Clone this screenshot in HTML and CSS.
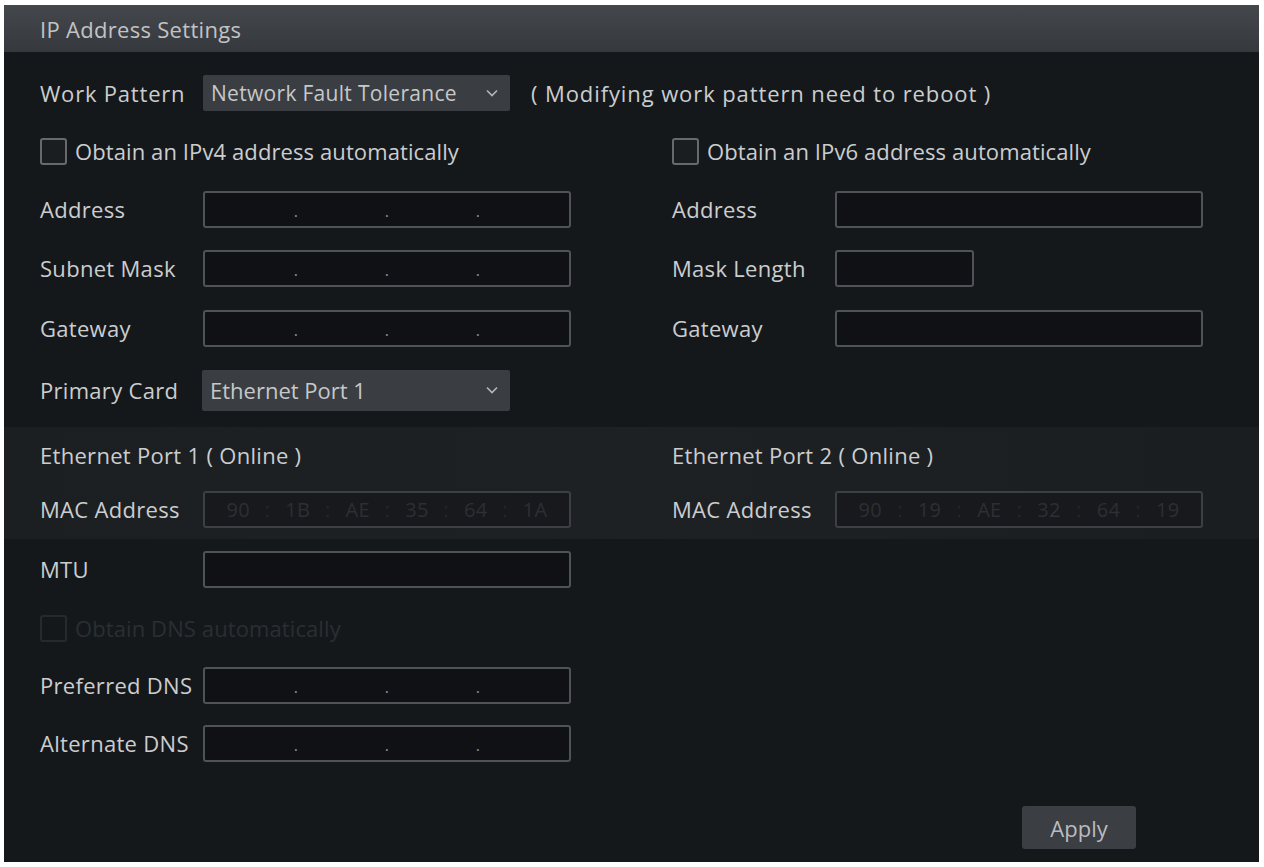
FILE: index.html
```html
<!DOCTYPE html>
<html lang="en">
<head>
    <meta charset="UTF-8">
    <meta name="viewport" content="width=device-width, initial-scale=1.0">
    <title>IP Address Settings</title>
    <link rel="stylesheet" href="styles.css">
</head>
<body>

<div class="panel">
    <div class="titlebar">IP Address Settings</div>

    <div class="content">

        <!-- Work pattern -->
        <div class="row">
            <span class="label label-short">Work Pattern</span>
            <div class="select select-work">
                <span>Network Fault Tolerance</span>
                <svg class="chev" viewBox="0 0 12 8"><polyline points="1,1.5 6,6.5 11,1.5"/></svg>
            </div>
            <span class="note">( Modifying work pattern need to reboot )</span>
        </div>

        <!-- IPv4 / IPv6 -->
        <div class="cols">
            <div class="col">
                <div class="row">
                    <label class="check"><span class="box"></span>Obtain an IPv4 address automatically</label>
                </div>
                <div class="row">
                    <span class="label">Address</span>
                    <div class="input ip"><span class="seg"></span><span class="dot">.</span><span class="seg"></span><span class="dot">.</span><span class="seg"></span><span class="dot">.</span><span class="seg"></span></div>
                </div>
                <div class="row row-60">
                    <span class="label">Subnet Mask</span>
                    <div class="input ip"><span class="seg"></span><span class="dot">.</span><span class="seg"></span><span class="dot">.</span><span class="seg"></span><span class="dot">.</span><span class="seg"></span></div>
                </div>
                <div class="row row-60">
                    <span class="label">Gateway</span>
                    <div class="input ip"><span class="seg"></span><span class="dot">.</span><span class="seg"></span><span class="dot">.</span><span class="seg"></span><span class="dot">.</span><span class="seg"></span></div>
                </div>
                <div class="row row-64">
                    <span class="label">Primary Card</span>
                    <div class="select select-card">
                        <span>Ethernet Port 1</span>
                        <svg class="chev" viewBox="0 0 12 8"><polyline points="1,1.5 6,6.5 11,1.5"/></svg>
                    </div>
                </div>
            </div>

            <div class="col">
                <div class="row">
                    <label class="check"><span class="box"></span>Obtain an IPv6 address automatically</label>
                </div>
                <div class="row">
                    <span class="label">Address</span>
                    <div class="input"></div>
                </div>
                <div class="row row-60">
                    <span class="label">Mask Length</span>
                    <div class="input input-short"></div>
                </div>
                <div class="row row-60">
                    <span class="label">Gateway</span>
                    <div class="input"></div>
                </div>
            </div>
        </div>

        <!-- Ethernet ports -->
        <div class="band">
            <div class="cols">
                <div class="col">
                    <div class="row row-56">
                        <span class="port">Ethernet Port 1 ( Online )</span>
                    </div>
                    <div class="row row-52">
                        <span class="label">MAC Address</span>
                        <div class="input mac">
                            <span>90</span><i>:</i><span>1B</span><i>:</i><span>AE</span><i>:</i><span>35</span><i>:</i><span>64</span><i>:</i><span>1A</span>
                        </div>
                    </div>
                </div>
                <div class="col">
                    <div class="row row-56">
                        <span class="port">Ethernet Port 2 ( Online )</span>
                    </div>
                    <div class="row row-52">
                        <span class="label">MAC Address</span>
                        <div class="input mac">
                            <span>90</span><i>:</i><span>19</span><i>:</i><span>AE</span><i>:</i><span>32</span><i>:</i><span>64</span><i>:</i><span>19</span>
                        </div>
                    </div>
                </div>
            </div>
        </div>

        <!-- MTU / DNS -->
        <div class="col">
            <div class="row row-60">
                <span class="label">MTU</span>
                <div class="input"></div>
            </div>
            <div class="row">
                <label class="check disabled"><span class="box"></span>Obtain DNS automatically</label>
            </div>
            <div class="row row-56">
                <span class="label">Preferred DNS</span>
                <div class="input ip"><span class="seg"></span><span class="dot">.</span><span class="seg"></span><span class="dot">.</span><span class="seg"></span><span class="dot">.</span><span class="seg"></span></div>
            </div>
            <div class="row row-60">
                <span class="label">Alternate DNS</span>
                <div class="input ip"><span class="seg"></span><span class="dot">.</span><span class="seg"></span><span class="dot">.</span><span class="seg"></span><span class="dot">.</span><span class="seg"></span></div>
            </div>
        </div>

        <div class="actions">
            <button class="apply-btn">Apply</button>
        </div>
    </div>
</div>

</body>
</html>
```

FILE: styles.css
```css
body {
    margin: 0;
    background: #ffffff;
    font-family: "Open Sans", "Noto Sans", sans-serif;
    color: #cbcdcf;
}
.panel {
    margin: 5px 5px 5px 4px;
    height: 857px;
    background: #15181b;
    display: flex;
    flex-direction: column;
}
.titlebar {
    height: 47px;
    line-height: 49px;
    padding-left: 36px;
    background: linear-gradient(#44474c, #35383d);
    color: #c2c3c5;
    font-size: 22px;
    letter-spacing: 0.3px;
}
.content {
    flex: 1;
    display: flex;
    flex-direction: column;
    padding: 12px 0 0 36px;
}
.cols {
    display: grid;
    grid-template-columns: 632px 1fr;
}
.row {
    display: flex;
    align-items: center;
    height: 58px;
    font-size: 22px;
    letter-spacing: 0.3px;
}
.row-52 { height: 52px; }
.row-56 { height: 56px; }
.row-60 { height: 60px; }
.row-64 { height: 64px; }
.label {
    width: 163px;
    flex-shrink: 0;
    white-space: nowrap;
}
.label-short {
    width: 167px;
    letter-spacing: 0.8px;
}
.note {
    margin-left: 21px;
    letter-spacing: 0.9px;
}
.select {
    display: flex;
    align-items: center;
    justify-content: space-between;
    background: #3a3d41;
    padding: 0 12px 0 8px;
    box-sizing: border-box;
    border-radius: 2px;
    color: #c6c8ca;
    letter-spacing: 0;
}
.select-work {
    width: 307px;
    height: 36px;
    margin-left: -4px;
    font-size: 21px;
    letter-spacing: 0.3px;
}
.select-card {
    width: 308px;
    height: 41px;
    margin-left: -1px;
}
.chev {
    width: 12px;
    height: 8px;
    fill: none;
    stroke: #b5b7ba;
    stroke-width: 1.6;
}
.check {
    display: flex;
    align-items: center;
    gap: 8px;
    letter-spacing: 0.1px;
}
.check .box {
    width: 23px;
    height: 23px;
    border: 2px solid #66696d;
    border-radius: 3px;
    background: #1b1e21;
}
.check.disabled {
    color: #2b2e32;
}
.check.disabled .box {
    border-color: #272a2d;
    background: transparent;
}
.input {
    width: 368px;
    height: 37px;
    box-sizing: border-box;
    border: 2px solid #4f5256;
    border-radius: 3px;
    background: #0f1114;
}
.input-short {
    width: 139px;
}
.ip {
    display: flex;
    align-items: center;
}
.ip .seg {
    flex: 1;
}
.ip .dot {
    width: 0;
    display: flex;
    justify-content: center;
    color: #8d9093;
    font-size: 16px;
    position: relative;
    top: 2px;
}
.mac {
    display: flex;
    align-items: center;
    justify-content: space-around;
    padding: 0 14px;
    color: #2c2f33;
    font-size: 20px;
    background: #17191c;
    border-color: #3c3f43;
}
.mac i {
    font-style: normal;
    color: #24272a;
}
.band {
    margin: 5px 0 0 -36px;
    padding: 0 0 4px 36px;
    background: linear-gradient(90deg, #1c1f22 0%, #1e2124 50%, #1b1e21 100%);
}
.port {
    white-space: nowrap;
}
.actions {
    margin-top: auto;
    display: flex;
    justify-content: flex-end;
    padding: 0 123px 13px 0;
}
.apply-btn {
    width: 114px;
    height: 43px;
    background: #3b3e42;
    border: none;
    border-radius: 3px;
    color: #b9bcbf;
    font-family: "Open Sans", "Noto Sans", sans-serif;
    font-size: 22px;
}
```
